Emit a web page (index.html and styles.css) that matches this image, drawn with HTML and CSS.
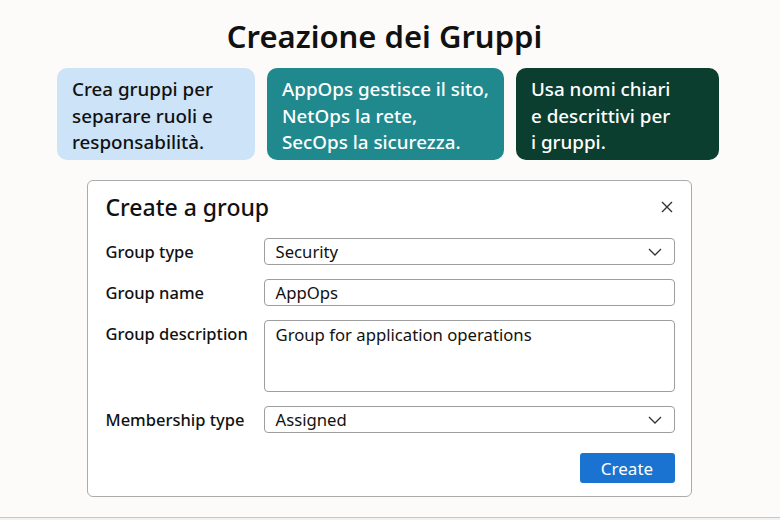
FILE: index.html
```html
<!DOCTYPE html>
<html lang="it">
<head>
<meta charset="utf-8">
<title>Creazione dei Gruppi</title>
<link rel="stylesheet" href="styles.css">
</head>
<body>
<div class="page">
  <h1 class="title">Creazione dei Gruppi</h1>
  <div class="cards">
    <div class="card card-light">Crea gruppi per<br>separare ruoli e<br>responsabilità.</div>
    <div class="card card-teal">AppOps gestisce il sito,<br>NetOps la rete,<br>SecOps la sicurezza.</div>
    <div class="card card-dark">Usa nomi chiari<br>e descrittivi per<br>i gruppi.</div>
  </div>
  <div class="dialog">
    <div class="dialog-head">
      <h2 class="dialog-title">Create a group</h2>
      <svg class="close" width="14" height="14" viewBox="0 0 14 14"><path d="M2 2 L12 12 M12 2 L2 12" stroke="#333" stroke-width="1.4" fill="none"/></svg>
    </div>
    <div class="form">
      <div class="label">Group type</div>
      <div class="field select"><span>Security</span><svg class="chev" width="14" height="8" viewBox="0 0 14 8"><path d="M1 1 L7 7 L13 1" stroke="#333" stroke-width="1.3" fill="none"/></svg></div>
      <div class="label">Group name</div>
      <div class="field">AppOps</div>
      <div class="label label-top">Group description</div>
      <div class="field textarea">Group for application operations</div>
      <div class="label">Membership type</div>
      <div class="field select"><span>Assigned</span><svg class="chev" width="14" height="8" viewBox="0 0 14 8"><path d="M1 1 L7 7 L13 1" stroke="#333" stroke-width="1.3" fill="none"/></svg></div>
    </div>
    <div class="actions"><button class="btn">Create</button></div>
  </div>
</div>
<div class="footer"></div>
</body>
</html>
```
FILE: styles.css
```css
html, body {
  margin: 0;
  padding: 0;
  background: #fcfbf9;
}
body {
  width: 780px;
  height: 520px;
  overflow: hidden;
  font-family: "Noto Sans", "Open Sans", sans-serif;
  color: #111;
}
.page {
  height: 517px;
  display: flex;
  flex-direction: column;
  align-items: center;
}
.title {
  margin: 15px 0 0 -11px;
  font-size: 31px;
  font-weight: 600;
  line-height: 42px;
  color: #111;
}
.cards {
  display: flex;
  gap: 12px;
  margin-top: 11px;
  margin-left: -4px;
}
.card {
  height: 92px;
  box-sizing: border-box;
  border-radius: 10px;
  padding: 8px 10px 0 15px;
  font-size: 18.8px;
  line-height: 26.5px;
  font-weight: 500;
  white-space: nowrap;
}
.card-light { width: 198px; background: #cce3f8; color: #111; }
.card-teal { width: 237px; background: #1f898e; color: #fff; }
.card-dark { width: 203px; background: #0c3e2f; color: #fff; }
.dialog {
  margin-top: 20px;
  margin-left: -2px;
  width: 605px;
  height: 317px;
  box-sizing: border-box;
  border: 1.5px solid #ababab;
  border-radius: 6px;
  background: #fff;
  padding: 8px 16px 0 18px;
  display: flex;
  flex-direction: column;
}
.dialog-head {
  display: flex;
  align-items: center;
  justify-content: space-between;
  height: 36px;
}
.dialog-title {
  margin: 0;
  font-size: 23px;
  font-weight: 500;
  color: #111;
}
.close { margin-right: 1px; }
.form {
  margin-top: 13px;
  display: grid;
  grid-template-columns: 158px 411px;
  row-gap: 14px;
  align-items: center;
}
.label {
  font-size: 16.5px;
  font-weight: 500;
  color: #111;
}
.label-top {
  align-self: start;
  padding-top: 2px;
}
.field {
  box-sizing: border-box;
  height: 27px;
  border: 1px solid #9e9e9e;
  border-radius: 4px;
  padding: 0 10px 0 11px;
  font-size: 16.7px;
  display: flex;
  align-items: center;
  color: #111;
}
.select { justify-content: space-between; }
.chev { margin-right: 2px; }
.textarea {
  height: 72px;
  align-items: flex-start;
  padding-top: 2px;
}
.actions {
  margin-top: 20px;
  display: flex;
  justify-content: flex-end;
}
.btn {
  width: 95px;
  height: 30px;
  border: none;
  border-radius: 3px;
  background: #1a73d0;
  color: #fff;
  font-family: "Noto Sans", "Open Sans", sans-serif;
  font-size: 17px;
}
.footer {
  height: 2px;
  border-top: 1px solid #c6c6c6;
  background: #f2f2f2;
}
```
